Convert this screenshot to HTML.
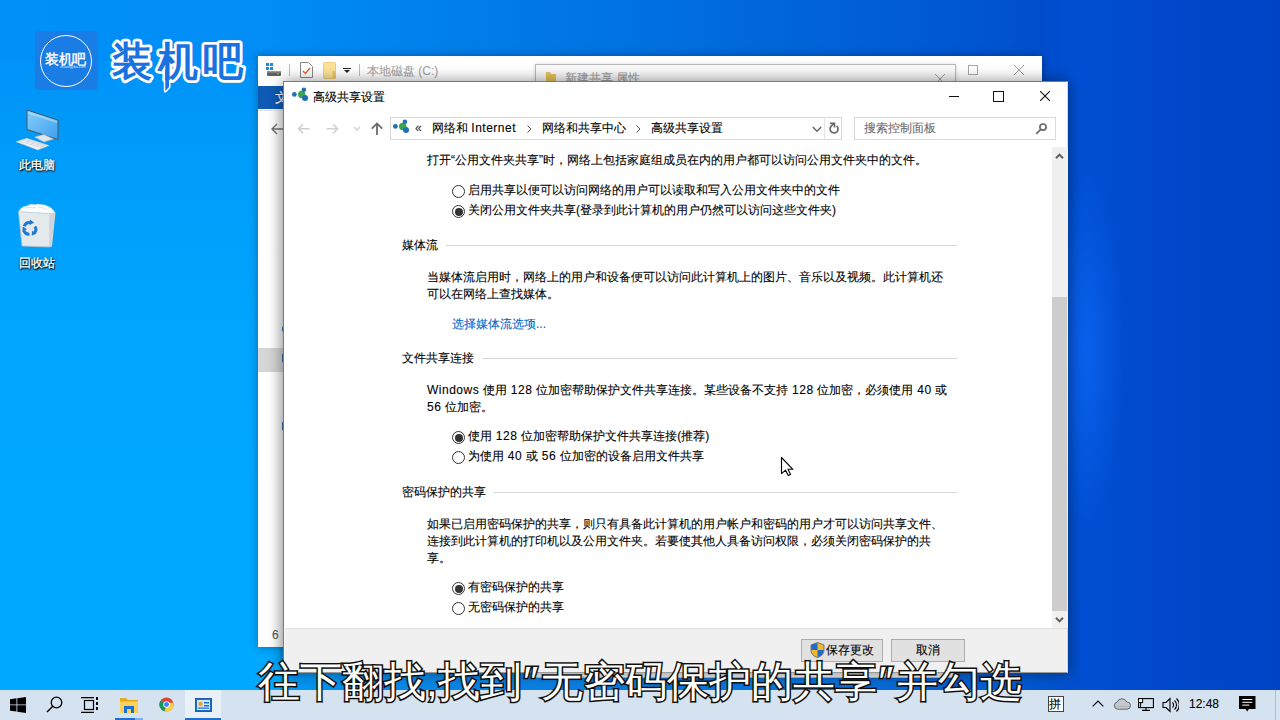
<!DOCTYPE html>
<html><head><meta charset="utf-8">
<style>
*{margin:0;padding:0;box-sizing:border-box}
html,body{width:1280px;height:720px;overflow:hidden}
body{position:relative;font-family:"Liberation Sans",sans-serif;font-size:12px;color:#000;
background:#0048cc}
.a{position:absolute}
.t{position:absolute;white-space:nowrap;line-height:14px;-webkit-text-stroke:.1px currentColor}
#wl{left:0;top:0;width:300px;height:690px;background:linear-gradient(180deg,#0090f8 0,#0092f8 60px,#009cfa 150px,#00a4fd 300px,#00a8ff 500px,#00a8ff 690px)}
#wt{left:0;top:0;width:1280px;height:60px;background:linear-gradient(90deg,#0090f8 0,#008ef6 250px,#0070e0 650px,#0058d2 950px,#0048c8 1100px,#0044c4 1280px)}
#wr{left:1040px;top:0;width:240px;height:690px;background:linear-gradient(90deg,#004ccc 0,#0050d4 40px,#0048cc 120px,#0044c6 240px)}
#wb{left:280px;top:600px;width:800px;height:90px;background:linear-gradient(90deg,#0098f4 0,#0a88e8 120px,#0a7ce0 320px,#0a6ed8 570px,#0058d0 750px,#004ecc 800px)}
#ws{left:1050px;top:150px;width:90px;height:400px;background:radial-gradient(ellipse 40px 180px at 35px 200px,rgba(20,110,255,.55),rgba(20,110,255,0))}
/* taskbar */
#tb{left:0;top:690px;width:1280px;height:30px;background:#d5e3f0}
/* back explorer */
#bx{left:258px;top:56px;width:784px;height:591px;background:#fff;box-shadow:0 0 8px rgba(0,0,0,.35)}
/* front dialog */
#dl{left:283px;top:81px;width:785px;height:592px;background:#fff;border:1px solid #7a7a7a;border-right-color:#d8d8d8;border-bottom-color:#9a9a9a;box-shadow:0 0 14px rgba(0,0,0,.45)}
.rad{position:absolute;width:13px;height:13px;border:1px solid #333;border-radius:50%;background:#fff}
.rad.on::after{content:"";position:absolute;left:1.5px;top:1.5px;width:8px;height:8px;border-radius:50%;background:#333}
.l{letter-spacing:.5px}
.hd{position:absolute;height:1px;background:#d6d6d6}
.sub{position:absolute;white-space:nowrap;font-size:42px;line-height:50px;color:#fff;-webkit-text-stroke:3px #111;paint-order:stroke fill;text-shadow:1px 1px 1px rgba(0,0,0,.35)}
</style></head><body>
<div class="a" id="wl"></div><div class="a" id="wt"></div><div class="a" id="wr"></div><div class="a" id="ws"></div><div class="a" id="wb"></div>

<!-- logo -->
<div class="a" style="left:35px;top:31px;width:63px;height:59px;border-radius:4px;background:#1a7de6"></div>
<div class="a" style="left:40px;top:35px;width:52px;height:52px;border-radius:50%;border:1.6px solid #fff"></div>
<div class="t" style="left:45px;top:51px;font-size:14px;line-height:16px;color:#fff;letter-spacing:-.5px;-webkit-text-stroke:.4px #fff">装机吧</div>
<div class="t" style="left:60px;top:65px;font-size:3.7px;line-height:4px;color:#dbe9fb;-webkit-text-stroke:0">zhuangjiba.com</div>
<svg class="a" style="left:100px;top:30px" width="160" height="70" viewBox="0 0 160 70"><path d="M65.3 42v19l3.7-4V42z" fill="#1a72e0" stroke="#fff" stroke-width="3" stroke-linejoin="round"/><text x="12" y="45" font-family="Liberation Sans, sans-serif" font-size="40" font-weight="bold" fill="#1a72e0" stroke="#fff" stroke-width="5.5" stroke-linejoin="round" paint-order="stroke fill" letter-spacing="5.5">装机吧</text><path d="M65.3 40v21l3.7-4V40z" fill="#1a72e0"/></svg>

<!-- desktop icons -->
<svg class="a" style="left:10px;top:100px" width="60" height="60" viewBox="10 100 60 60">
 <defs><linearGradient id="scr" x1="0" y1="0" x2="1" y2="1"><stop offset="0" stop-color="#86d0fa"/><stop offset="1" stop-color="#3e9ef0"/></linearGradient></defs>
 <polygon points="27,110 58,120 58,139.5 27,129.5" fill="url(#scr)" stroke="#4a5660" stroke-width="1"/>
 <polygon points="28,111.5 57,121 57,123 28,113.5" fill="#b8e4fc" opacity=".6"/>
 <polygon points="34.5,137 44,134.5 53.5,139 44,142" fill="#dfe6ea" stroke="#aab4bc" stroke-width=".5"/>
 <polygon points="16,141.7 26.7,138.3 49,145.6 37.8,150" fill="#eef2f4" stroke="#b8c2c8" stroke-width=".6"/>
 <path d="M19 141l22 6.5M22 140l22 6.5M24 139.3l22 6.5M26 143.5l3-3.5M31 145l3-3.5M36 146.5l3-3.5M41 148l3-3.5" stroke="#c0c8ce" stroke-width=".5"/>
</svg>
<div class="t" style="left:19px;top:158px;color:#fff;-webkit-text-stroke:.3px #fff;text-shadow:0 1px 2px #000,1px 1px 1px #000,0 0 2px rgba(0,0,0,.6)">此电脑</div>

<svg class="a" style="left:10px;top:195px" width="60" height="60" viewBox="10 195 60 60">
 <polygon points="18.5,211.5 50,213.5 50,247 22,246" fill="#e4e9ec" stroke="#b8c2c8" stroke-width=".8"/>
 <polygon points="50,213.5 55.5,212.8 52,246.5 50,247" fill="#cfd6db"/>
 <path d="M19 211.5C22 205 27 207 29 205c3-2 6 1 9-1 3 1 6 0 9 2 3 1 6 3 8 6.8L50 213.5z" fill="#fafcfd" stroke="#d0d8de" stroke-width=".6"/>
 <path d="M25 208c4-2 8 1 11-1M38 207c3 0 6 1 9 3" stroke="#dde3e7" stroke-width="1" fill="none"/>
 <g fill="none" stroke="#1f78d6" stroke-width="3">
  <path d="M24.2 226.2a5.6 5.6 0 0 1 6.2-3.6"/><path d="M35 226.5a5.6 5.6 0 0 1-.8 6.8"/><path d="M29.5 234.3a5.6 5.6 0 0 1-5.6-3.8"/>
 </g>
 <path d="M30 219.5l4.2 3.3-4.6 2.2zM36.6 233.4l-4.9 2.3.3-4.9zM22.3 231.6l.6-5.1 4 2.8z" fill="#1f78d6"/>
</svg>
<div class="t" style="left:19px;top:256px;color:#fff;-webkit-text-stroke:.3px #fff;text-shadow:0 1px 2px #000,1px 1px 1px #000,0 0 2px rgba(0,0,0,.6)">回收站</div>

<!-- back explorer window -->
<div class="a" id="bx">
 <div class="a" style="left:0;top:30px;width:26px;height:23px;background:#0f5ab4"></div>
 <div class="t" style="left:17px;top:35px;color:#fff;font-size:13px">文</div>
 <div class="a" style="left:0;top:53px;width:26px;height:516px;background:linear-gradient(90deg,#fff 0,#fff 12px,#ececec 26px)"></div>
 <div class="a" style="left:0;top:54px;width:26px;height:1px;background:#e4e4e4"></div>
 <div class="a" style="left:0;top:292px;width:26px;height:24px;background:linear-gradient(90deg,#d8d8d8 0,#d0d0d0 26px)"></div>
 <div class="a" style="left:0;top:569px;width:26px;height:22px;background:linear-gradient(90deg,#fff 0,#fff 12px,#ececec 26px)"></div>
 <div class="t" style="left:14px;top:572px;color:#555;font-size:12px">6</div>
 <div class="a" style="left:24px;top:270px;width:2px;height:6px;border-radius:2px 0 0 2px;background:#2a78c8"></div>
 <div class="a" style="left:24px;top:298px;width:2px;height:8px;background:#3a6ea8"></div>
 <div class="a" style="left:25px;top:338px;width:1px;height:4px;background:#9ab"></div>
 <div class="a" style="left:24px;top:366px;width:2px;height:8px;background:#3a6ea8"></div>
 <svg class="a" style="left:12px;top:66px" width="14" height="14" viewBox="0 0 14 14"><path d="M13 7H2M7 2L2 7l5 5" fill="none" stroke="#707070" stroke-width="1.4"/></svg>
 <!-- title bar icons -->
 <svg class="a" style="left:8px;top:7px" width="16" height="14" viewBox="0 0 16 14">
  <rect x="0" y="0" width="3" height="3" fill="#1e88e5"/><rect x="4" y="0" width="3" height="3" fill="#1e88e5"/><rect x="0" y="4" width="3" height="3" fill="#1e88e5"/><rect x="4" y="4" width="3" height="3" fill="#1e88e5"/>
  <rect x="1" y="8" width="14" height="5" rx="1" fill="#606060"/><rect x="1" y="8" width="14" height="1.5" fill="#9a9a9a"/><rect x="11" y="10" width="2" height="1.5" fill="#3c3"/>
 </svg>
 <div class="a" style="left:31px;top:8px;width:1px;height:12px;background:#bbb"></div>
 <svg class="a" style="left:42px;top:6px" width="13" height="16" viewBox="0 0 13 16"><path d="M.5 .5h8l4 4v11H.5z" fill="#fff" stroke="#8a8a8a"/><path d="M3 9l2.5 2.5L10 6" fill="none" stroke="#e8642c" stroke-width="1.4"/></svg>
 <svg class="a" style="left:65px;top:6px" width="13" height="17" viewBox="0 0 13 17"><rect x=".5" y=".5" width="12" height="16" rx="1" fill="#fbe39a" stroke="#e8c468" stroke-width=".8"/><rect x="9.5" y="9" width="3" height="7.5" fill="#f2c65a"/></svg>
 <svg class="a" style="left:85px;top:12px" width="8" height="6" viewBox="0 0 8 6"><rect x="0" y="0" width="8" height="1" fill="#222"/><path d="M1 2h6l-3 3z" fill="#222"/></svg>
 <div class="a" style="left:101px;top:8px;width:1px;height:12px;background:#bbb"></div>
 <div class="t" style="left:109px;top:8px;color:#a4a4a4">本地磁盘 (C:)</div>
 <!-- max/close -->
 <div class="a" style="left:710px;top:9px;width:10px;height:10px;border:1px solid #a8a8a8"></div>
 <svg class="a" style="left:756px;top:9px" width="10" height="10" viewBox="0 0 10 10"><path d="M0 0l10 10M10 0L0 10" stroke="#a0a0a0" stroke-width="1"/></svg>
 <!-- properties dialog behind -->
 <div class="a" style="left:277px;top:8px;width:421px;height:614px;background:linear-gradient(180deg,#fbfbfb 0,#f4f4f4 20px,#f0f0f0 30px);border:1px solid #b8b8b8;box-shadow:0 0 4px rgba(0,0,0,.15)"></div>
 <svg class="a" style="left:288px;top:16px" width="10" height="12" viewBox="0 0 10 12"><path d="M0 0h4l1 2h5v10H0z" fill="#e8c15a"/></svg>
 <div class="t" style="left:307px;top:15px;color:#9a9a9a">新建共享 属性</div>
 <svg class="a" style="left:677px;top:18px" width="10" height="10" viewBox="0 0 10 10"><path d="M0 0l10 10M10 0L0 10" stroke="#a0a0a0" stroke-width="1"/></svg>
</div>

<!-- front dialog -->
<div class="a" id="dl"></div>
<!-- dialog title -->
<svg class="a" style="left:291px;top:87px" width="18" height="16" viewBox="0 0 18 16">
 <circle cx="3.4" cy="7.4" r="2.4" fill="#1f6fb8"/><circle cx="10.7" cy="7.4" r="3.7" fill="#3aa64a"/><circle cx="12.9" cy="2.7" r="2.3" fill="#1f6fb8"/><circle cx="14" cy="11" r="3" fill="#1f6fb8"/>
</svg>
<div class="t" style="left:313px;top:90px">高级共享设置</div>
<div class="a" style="left:949px;top:96px;width:10px;height:1px;background:#111"></div>
<div class="a" style="left:993px;top:91px;width:11px;height:11px;border:1px solid #111"></div>
<svg class="a" style="left:1040px;top:91px" width="10" height="10" viewBox="0 0 10 10"><path d="M0 0l10 10M10 0L0 10" stroke="#111" stroke-width="1.1"/></svg>
<!-- nav -->
<svg class="a" style="left:297px;top:122px" width="13" height="13" viewBox="0 0 13 13"><path d="M12.5 6.8H1.5M6 2.2L1.5 6.8 6 11.4" fill="none" stroke="#d0d0d0" stroke-width="1.6"/></svg>
<svg class="a" style="left:326px;top:122px" width="13" height="13" viewBox="0 0 13 13"><path d="M.5 6.8h11M7 2.2l4.5 4.6L7 11.4" fill="none" stroke="#d0d0d0" stroke-width="1.6"/></svg>
<svg class="a" style="left:353px;top:126px" width="8" height="6" viewBox="0 0 8 6"><path d="M1 1l3 3 3-3" fill="none" stroke="#d0d0d0" stroke-width="1.4"/></svg>
<svg class="a" style="left:370px;top:121px" width="14" height="15" viewBox="0 0 14 15"><path d="M7 14V2.5M1.8 7.6L7 2.4l5.2 5.2" fill="none" stroke="#6a6a6a" stroke-width="1.8"/></svg>
<div class="a" style="left:390px;top:117px;width:452px;height:23px;border:1px solid #d9d9d9;background:#fff"></div>
<div class="a" style="left:824px;top:118px;width:1px;height:21px;background:#e3e3e3"></div>
<svg class="a" style="left:392px;top:119px" width="18" height="16" viewBox="0 0 18 16">
 <circle cx="3.4" cy="7.4" r="2.4" fill="#1f6fb8"/><circle cx="10.7" cy="7.4" r="3.7" fill="#3aa64a"/><circle cx="12.9" cy="2.7" r="2.3" fill="#1f6fb8"/><circle cx="14" cy="11" r="3" fill="#1f6fb8"/>
</svg>
<div class="t" style="left:415px;top:121px;color:#333">«</div>
<div class="t" style="left:432px;top:121px">网络和 <span class="l">Internet</span></div>
<svg class="a" style="left:527px;top:125px" width="5" height="8" viewBox="0 0 5 8"><path d="M.5 .5l3.5 3.5-3.5 3.5" fill="none" stroke="#555" stroke-width="1"/></svg>
<div class="t" style="left:542px;top:121px">网络和共享中心</div>
<svg class="a" style="left:636px;top:125px" width="5" height="8" viewBox="0 0 5 8"><path d="M.5 .5l3.5 3.5-3.5 3.5" fill="none" stroke="#555" stroke-width="1"/></svg>
<div class="t" style="left:651px;top:121px">高级共享设置</div>
<svg class="a" style="left:812px;top:126px" width="10" height="7" viewBox="0 0 10 7"><path d="M.8 1l4.2 4.2L9.2 1" fill="none" stroke="#6a6a6a" stroke-width="1.6"/></svg>
<svg class="a" style="left:826px;top:119px" width="16" height="18" viewBox="0 0 16 18"><path d="M10.6 6.9A4 4 0 1 1 5.7 6.7L8.4 4.4" fill="none" stroke="#6a6a6a" stroke-width="1.7"/><path d="M4 4.3H8.5V8.5" fill="none" stroke="#6a6a6a" stroke-width="1.7"/></svg>
<div class="a" style="left:854px;top:117px;width:202px;height:23px;border:1px solid #d9d9d9;background:#fff"></div>
<div class="t" style="left:864px;top:121px;color:#6d6d6d">搜索控制面板</div>
<svg class="a" style="left:1034px;top:121px" width="14" height="14" viewBox="0 0 14 14"><circle cx="9" cy="6.1" r="3.1" fill="none" stroke="#6a6a6a" stroke-width="1.7"/><path d="M6.8 8.4L2.2 12.8" stroke="#6a6a6a" stroke-width="1.8"/></svg>
<!-- scrollbar -->
<div class="a" style="left:1052px;top:147px;width:16px;height:481px;background:#f0f0f0"></div>
<div class="a" style="left:1052px;top:297px;width:15px;height:314px;background:#cdcdcd"></div>
<svg class="a" style="left:1055px;top:152px" width="9" height="8" viewBox="0 0 9 8"><path d="M1 6.3L4.5 2.6 8 6.3" fill="none" stroke="#606060" stroke-width="2"/></svg>
<svg class="a" style="left:1055px;top:616px" width="9" height="8" viewBox="0 0 9 8"><path d="M1 1.7L4.5 5.4 8 1.7" fill="none" stroke="#606060" stroke-width="2"/></svg>
<!-- content -->
<div class="t" style="left:427px;top:153px">打开“公用文件夹共享”时，网络上包括家庭组成员在内的用户都可以访问公用文件夹中的文件。</div>
<div class="rad" style="left:452px;top:185px"></div>
<div class="t" style="left:468px;top:183px">启用共享以便可以访问网络的用户可以读取和写入公用文件夹中的文件</div>
<div class="rad on" style="left:452px;top:205px"></div>
<div class="t" style="left:468px;top:203px">关闭公用文件夹共享(登录到此计算机的用户仍然可以访问这些文件夹)</div>

<div class="t" style="left:402px;top:238px">媒体流</div>
<div class="hd" style="left:446px;top:245px;width:511px"></div>
<div class="t" style="left:427px;top:270px">当媒体流启用时，网络上的用户和设备便可以访问此计算机上的图片、音乐以及视频。此计算机还</div>
<div class="t" style="left:427px;top:287px">可以在网络上查找媒体。</div>
<div class="t" style="left:452px;top:317px;color:#0066cc">选择媒体流选项...</div>

<div class="t" style="left:402px;top:351px">文件共享连接</div>
<div class="hd" style="left:482px;top:358px;width:475px"></div>
<div class="t" style="left:427px;top:383px"><span class="l">Windows </span>使用<span class="l"> 128 </span>位加密帮助保护文件共享连接。某些设备不支持<span class="l"> 128 </span>位加密，必须使用<span class="l"> 40 </span>或</div>
<div class="t" style="left:427px;top:400px"><span class="l">56 </span>位加密。</div>
<div class="rad on" style="left:452px;top:431px"></div>
<div class="t" style="left:468px;top:429px">使用<span class="l"> 128 </span>位加密帮助保护文件共享连接(推荐)</div>
<div class="rad" style="left:452px;top:451px"></div>
<div class="t" style="left:468px;top:449px">为使用<span class="l"> 40 </span>或<span class="l"> 56 </span>位加密的设备启用文件共享</div>

<div class="t" style="left:402px;top:485px">密码保护的共享</div>
<div class="hd" style="left:494px;top:492px;width:463px"></div>
<div class="t" style="left:427px;top:517px">如果已启用密码保护的共享，则只有具备此计算机的用户帐户和密码的用户才可以访问共享文件、</div>
<div class="t" style="left:427px;top:534px">连接到此计算机的打印机以及公用文件夹。若要使其他人具备访问权限，必须关闭密码保护的共</div>
<div class="t" style="left:427px;top:551px">享。</div>
<div class="rad on" style="left:452px;top:582px"></div>
<div class="t" style="left:468px;top:580px">有密码保护的共享</div>
<div class="rad" style="left:452px;top:602px"></div>
<div class="t" style="left:468px;top:600px">无密码保护的共享</div>
<!-- footer -->
<div class="a" style="left:285px;top:628px;width:782px;height:44px;background:#f0f0f0;border-top:1px solid #dfdfdf"></div>
<div class="a" style="left:801px;top:639px;width:82px;height:23px;background:#e1e1e1;border:1px solid #adadad"></div>
<svg class="a" style="left:810px;top:642px" width="15" height="16" viewBox="0 0 15 16"><path d="M7.5 .5L14 3v5c0 4-3 6.5-6.5 7.5C4 14.5 1 12 1 8V3z" fill="#f2b830" stroke="#3a4a5a" stroke-width=".7"/><path d="M7.5 .9v7.1H1.3V3.1z" fill="#1f6cc8"/><path d="M7.5 8H13.7c-.3 3.8-3 6.3-6.2 7.2z" fill="#1f6cc8"/></svg>
<div class="t" style="left:826px;top:643px">保存更改</div>
<div class="a" style="left:891px;top:639px;width:74px;height:23px;background:#e1e1e1;border:1px solid #adadad"></div>
<div class="t" style="left:916px;top:643px">取消</div>
<!-- cursor -->
<svg class="a" style="left:780px;top:456px" width="15" height="21" viewBox="0 0 15 21"><path d="M1.5 1.5V17.6L5.6 14.2 8.2 19.6 10.6 18.6 8 13.3H12.9Z" fill="#fff" stroke="#000" stroke-width="1.1" stroke-linejoin="round"/></svg>

<!-- taskbar -->
<div class="a" id="tb"></div>
<svg class="a" style="left:10px;top:697px" width="16" height="16" viewBox="0 0 16 16"><path d="M0 2.2l6.5-.9v6.2H0zM7.3 1.2L16 0v7.5H7.3zM0 8.3h6.5v6.3L0 13.8zM7.3 8.3H16V16l-8.7-1.2z" fill="#000"/></svg>
<svg class="a" style="left:46px;top:696px" width="17" height="17" viewBox="0 0 17 17"><circle cx="10.5" cy="6.5" r="5.3" fill="none" stroke="#000" stroke-width="1.3"/><path d="M6.8 10.2L1 16" stroke="#000" stroke-width="1.5"/></svg>
<svg class="a" style="left:81px;top:697px" width="18" height="16" viewBox="0 0 18 16"><rect x="3.5" y="3.5" width="9" height="9" fill="none" stroke="#000" stroke-width="1.2"/><path d="M0 .6h13M0 15.4h13" stroke="#000" stroke-width="1.2"/><rect x="15" y="0" width="2" height="3" fill="#000"/><rect x="15" y="5" width="2" height="3" fill="#000"/><rect x="15" y="10" width="2" height="3" fill="#000"/></svg>
<svg class="a" style="left:120px;top:697px" width="18" height="16" viewBox="0 0 18 16"><path d="M0 1h6l2 2h10v13H0z" fill="#e8a820"/><path d="M0 4.5h18V16H0z" fill="#fbd35a"/><path d="M4 16V9h10v7h-3v-4H7v4z" fill="#1a6fd0"/></svg>
<div class="a" style="left:115px;top:718px;width:20px;height:2px;background:#1f6fd0"></div>
<div class="a" style="left:135px;top:718px;width:8px;height:2px;background:#7fb2e6"></div>
<svg class="a" style="left:159px;top:697px" width="15" height="15" viewBox="0 0 16 16"><circle cx="8" cy="8" r="7.5" fill="#db4437"/><path d="M8 8L1.5 4.2A7.5 7.5 0 0 0 6 15.3z" fill="#0f9d58"/><path d="M8 8l-2 7.3A7.5 7.5 0 0 0 15.5 8V6H8z" fill="#ffcd40"/><circle cx="8" cy="8" r="3.4" fill="#fff"/><circle cx="8" cy="8" r="2.6" fill="#4285f4"/></svg>
<div class="a" style="left:185px;top:690px;width:36px;height:30px;background:#e8f0f8"></div>
<div class="a" style="left:185px;top:718px;width:36px;height:2px;background:#1f6fd0"></div>
<svg class="a" style="left:195px;top:698px" width="17" height="14" viewBox="0 0 17 14"><rect x=".5" y=".5" width="16" height="13" fill="#1e6fc8" stroke="#1c5fb0"/><rect x="2" y="2" width="13" height="10" fill="#cfe6fb"/><circle cx="5.5" cy="6" r="2.2" fill="#f0a020"/><rect x="9" y="4" width="5" height="1.5" fill="#1e6fc8"/><rect x="9" y="7" width="5" height="1.5" fill="#1e6fc8"/><rect x="3" y="9.5" width="11" height="1.2" fill="#1e6fc8"/></svg>
<!-- tray -->
<div class="a" style="left:1048px;top:696px;width:16px;height:16px;border:1px solid #444;background:#fff"></div>
<div class="t" style="left:1049px;top:697px;font-size:12px;line-height:14px">拼</div>
<svg class="a" style="left:1092px;top:700px" width="12" height="7" viewBox="0 0 12 7"><path d="M.7 6.3L6 1l5.3 5.3" fill="none" stroke="#000" stroke-width="1.2"/></svg>
<svg class="a" style="left:1113px;top:698px" width="18" height="12" viewBox="0 0 18 12"><path d="M4.5 11.2a3.6 3.6 0 0 1-.4-7.1A5.2 5.2 0 0 1 13.8 4a3.6 3.6 0 0 1 .2 7.2z" fill="#c4c8cc" stroke="#5a5e62" stroke-width=".9"/><path d="M1.5 8.5h15" stroke="#8a8e92" stroke-width=".6" opacity=".5"/></svg>
<svg class="a" style="left:1138px;top:698px" width="16" height="13" viewBox="0 0 16 13"><rect x=".6" y=".6" width="14.8" height="9" fill="none" stroke="#000" stroke-width="1.1"/><path d="M8 9.6v2.8M4 12.4h8" stroke="#000" stroke-width="1.1"/><rect x=".6" y=".6" width="4" height="4" fill="#fff" stroke="#000" stroke-width="1"/><path d="M2.6 4.6v5" stroke="#000" stroke-width="1"/></svg>
<svg class="a" style="left:1162px;top:697px" width="17" height="16" viewBox="0 0 17 16"><path d="M1 5.5h3l4-4v13l-4-4H1z" fill="none" stroke="#000" stroke-width="1.1"/><path d="M10.5 5.5a3.5 3.5 0 0 1 0 5M12.5 3.5a6 6 0 0 1 0 9M14.5 1.5a9 9 0 0 1 0 13" fill="none" stroke="#000" stroke-width="1.1"/></svg>
<div class="t" style="left:1189px;top:697px;font-size:12px">12:48</div>
<svg class="a" style="left:1239px;top:696px" width="17" height="17" viewBox="0 0 17 17"><path d="M0 0h16.5v13H10l-1.8 2.6L6.5 13H0z" fill="#000"/><path d="M3.3 3.5h10M3.3 6.3h10M3.3 9.1h7" stroke="#fff" stroke-width="1"/></svg>
<div class="a" style="left:1275px;top:690px;width:1px;height:30px;background:#aebfd0"></div>
<!-- subtitle -->
<div class="sub" style="left:258px;top:657px">往下翻找,找到<span style="margin:0 3px 0 1.5px">″</span>无密码保护的共享<span style="margin:0 3px 0 1.5px">″</span>并勾选</div>


</body></html>
